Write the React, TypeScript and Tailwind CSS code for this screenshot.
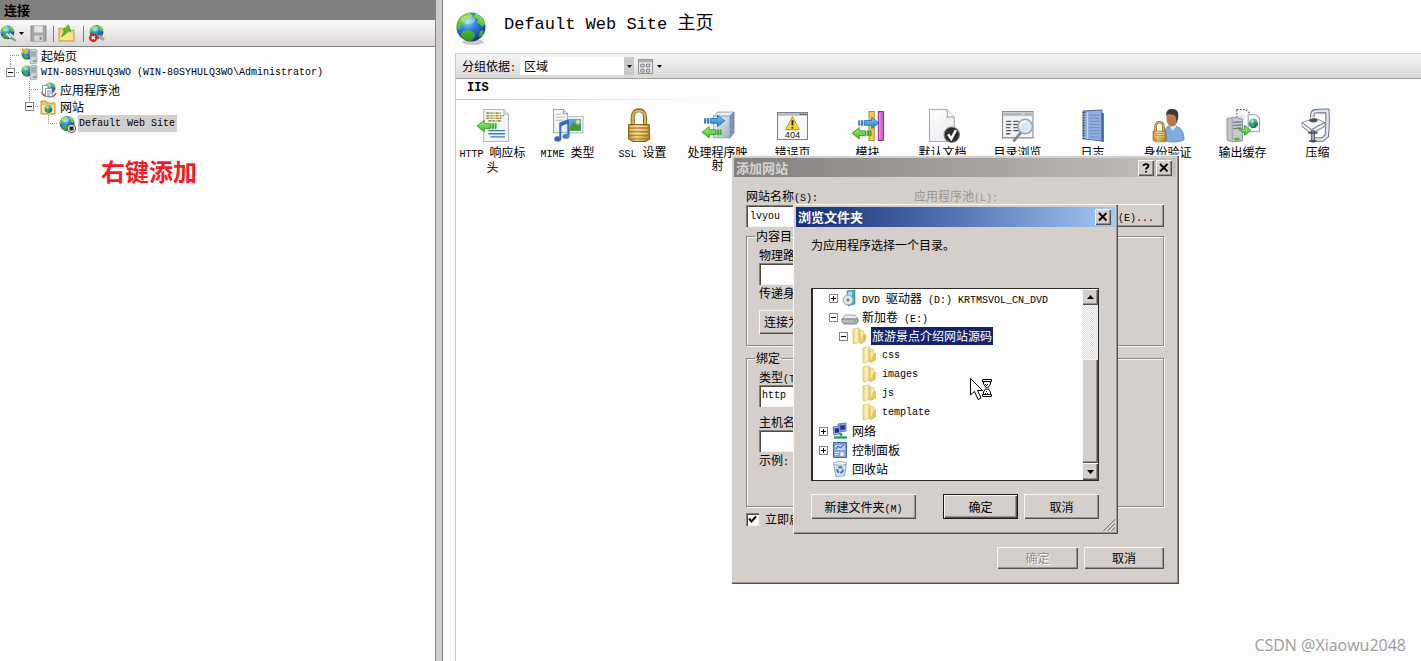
import type { ReactNode } from "react";
import { useState } from "react";

const RAISED =
  "bg-[#d5cfcb] shadow-[inset_1px_1px_0_#f8f6f4,inset_-1px_-1px_0_#55514e,inset_-2px_-2px_0_#98928e]";
const SUNKEN =
  "bg-[#fefefe] shadow-[inset_1px_1px_0_#84807c,inset_2px_2px_0_#4c4846,inset_-1px_-1px_0_#f4f2f0]";
const ETCHED = "border border-[#8c8783] shadow-[1px_1px_0_#f8f6f4,inset_1px_1px_0_#f8f6f4]";
const LATIN = "font-['Liberation_Mono',monospace] text-[10px]";

function runs(text: string) {
  return text.split(/([\x20-\x7e]+)/).map((part, i) =>
    i % 2 ? (
      <span key={i} className={`${LATIN} leading-none`}>
        {part}
      </span>
    ) : (
      part
    ),
  );
}

/* Mixed text: Latin runs are set smaller so that two of their cells fill one ideograph. */
function T({ children }: { children: string }) {
  const latinOnly = /^[\x20-\x7e]+$/.test(children);
  return <span className={`whitespace-pre ${latinOnly ? LATIN : ""}`}>{runs(children)}</span>;
}

function Gradients() {
  return (
    <svg width="0" height="0" className="absolute" aria-hidden="true">
      <defs>
        <radialGradient id="sea" cx="0.38" cy="0.3" r="0.75">
          <stop offset="0" stopColor="#8fe0fb" />
          <stop offset="0.4" stopColor="#2f86d8" />
          <stop offset="1" stopColor="#12307c" />
        </radialGradient>
        <linearGradient id="land" x1="0" y1="0" x2="0" y2="1">
          <stop offset="0" stopColor="#8be04a" />
          <stop offset="1" stopColor="#2a9a1e" />
        </linearGradient>
        <linearGradient id="gold" x1="0" y1="0" x2="1" y2="0">
          <stop offset="0" stopColor="#b98a2c" />
          <stop offset="0.4" stopColor="#f0d68a" />
          <stop offset="1" stopColor="#a87620" />
        </linearGradient>
        <linearGradient id="folder" x1="0" y1="0" x2="1" y2="0">
          <stop offset="0" stopColor="#ecd67c" />
          <stop offset="0.5" stopColor="#fcf4b8" />
          <stop offset="1" stopColor="#e4c864" />
        </linearGradient>
        <linearGradient id="steel" x1="0" y1="0" x2="1" y2="1">
          <stop offset="0" stopColor="#f8fafd" />
          <stop offset="1" stopColor="#9cabc0" />
        </linearGradient>
        <linearGradient id="paper" x1="0" y1="0" x2="1" y2="1">
          <stop offset="0" stopColor="#ffffff" />
          <stop offset="1" stopColor="#e4e8ec" />
        </linearGradient>
        <linearGradient id="bluearrow" x1="0" y1="0" x2="0" y2="1">
          <stop offset="0" stopColor="#7cc8f4" />
          <stop offset="1" stopColor="#1c84d8" />
        </linearGradient>
        <linearGradient id="greenarrow" x1="0" y1="0" x2="0" y2="1">
          <stop offset="0" stopColor="#a4f074" />
          <stop offset="1" stopColor="#3cc024" />
        </linearGradient>
      </defs>
    </svg>
  );
}

function Globe({ x = 8, y = 8, r = 7 }: { x?: number; y?: number; r?: number }) {
  return (
    <g transform={`translate(${x} ${y}) scale(${r / 10})`}>
      <circle r="10" fill="url(#sea)" />
      <path
        d="M-9-4C-8-7-5-9.500-1-9.800L1-8 -1-6 -3-5.500 -4-3 -7-1 -8 2 -9.600 1ZM3-9.300C6-8.500 9-5.500 9.700-2L8 0 6-2 4-3 5-5 2-7ZM-6 3L-2 2 2 4 3 6 0 9.800C-3 9.800-6 8-7 6ZM6 3L8.800 2 8 6 5.500 7Z"
        fill="url(#land)"
      />
      <ellipse cx="-2" cy="-5" rx="5" ry="3" fill="#fff" opacity="0.3" />
    </g>
  );
}

function Server({ x = 9, y = 1 }: { x?: number; y?: number }) {
  return (
    <g transform={`translate(${x} ${y})`}>
      <path d="M0 1L5 0 7 1V14L1 15 0 14Z" fill="#ccd3d8" stroke="#848e98" strokeWidth="0.600" />
      <path d="M1 3H6M1 5H6M1 7H6" stroke="#6c7680" strokeWidth="0.800" />
      <path d="M3 11H6V13H3Z" fill="#5fc23a" />
    </g>
  );
}

function Svg({ s = 16, v = 16, children }: { s?: number; v?: number; children: ReactNode }) {
  return (
    <svg width={s} height={s} viewBox={`0 0 ${v} ${v}`} aria-hidden="true" className="shrink-0 overflow-visible">
      {children}
    </svg>
  );
}

function Padlock({ x = 0, y = 0, k = 1 }: { x?: number; y?: number; k?: number }) {
  return (
    <g transform={`translate(${x} ${y}) scale(${k})`}>
      <path d="M5.500 17V8C5.500-1 17.500-1 17.500 8V17" fill="none" stroke="#8a661c" strokeWidth="4" />
      <path d="M5.500 17V8C5.500-.5 17.500-.5 17.500 8V17" fill="none" stroke="#dcb85c" strokeWidth="2" />
      <path d="M1.500 15L21.500 15 22 29 18 31.500H6L1.500 29Z" fill="url(#gold)" stroke="#8f6618" />
      <path d="M2 18.500H21.500M2 22H21.500M2 25.500H21.500M3 29H20" stroke="#a87a24" strokeWidth="1" />
      <path d="M3 17H20M3 20.300H20M3 24H20" stroke="#f8e4a4" strokeWidth="0.800" />
    </g>
  );
}

const GreenArrow = ({ x, y }: { x: number; y: number }) => (
  <g transform={`translate(${x} ${y})`} fill="url(#greenarrow)" stroke="#2c9418" strokeWidth="0.800">
    <path d="M0 5.500L7 0V3.200H13V7.800H7V11Z" />
    <path d="M14.500 3.200H16V7.800H14.500ZM17.500 3.200H18.500V7.800H17.500Z" />
  </g>
);
const BlueArrow = ({ x, y }: { x: number; y: number }) => (
  <g transform={`translate(${x} ${y})`} fill="url(#bluearrow)" stroke="#1c68b4" strokeWidth="0.800">
    <path d="M20 5.500L13 0V3.200H6V7.800H13V11Z" />
    <path d="M3.200 3.200H4.500V7.800H3.200ZM.5 3.200H1.500V7.800H.5Z" />
  </g>
);

const features: { label: string; icon: ReactNode }[] = [
  {
    label: "HTTP 响应标头",
    icon: (
      <>
        <path d="M7.500.5H27L31.500 5V31.500H7.500Z" fill="#f0f8f4" stroke="#a9bcc0" />
        <path d="M27 .5V5H31.500" fill="#d8e4e6" stroke="#a9bcc0" />
        <path d="M10 4H24M10 6.500H27M10 9H25M12 11.500H24" stroke="#98922c" strokeWidth="1.500" strokeDasharray="3 1 2 1 1 1" />
        <path d="M12 21H28M12 24H28M14 27H28" stroke="#3c7cb8" strokeWidth="1.300" />
        <GreenArrow x={1} y={11} />
      </>
    ),
  },
  {
    label: "MIME 类型",
    icon: (
      <>
        <path d="M2.500.5H12L16 4.500V23H2.500Z" fill="url(#paper)" stroke="#9aa2aa" />
        <path d="M12 .5V4.500H16" fill="#dfe4e8" stroke="#9aa2aa" />
        <path d="M4.500 5H10M4.500 8H13M4.500 11H12" stroke="#b4bcc4" />
        <path d="M16 7.500H31V23H16Z" fill="#fff" stroke="#a4b0c0" />
        <path d="M18 9.500H29V21H18Z" fill="#58a4e4" />
        <path d="M18 21V18L22 12 26 17 29 14V21Z" fill="#48962c" />
        <circle cx="26" cy="12.500" r="2" fill="#f7dd50" />
        <path d="M9 29V14L17 11V26" fill="none" stroke="#3c6cbc" strokeWidth="2" />
        <path d="M9 15L17 12" stroke="#3c6cbc" strokeWidth="3.500" />
        <ellipse cx="6.500" cy="29" rx="3.300" ry="2.600" fill="#3868b8" />
        <ellipse cx="14.500" cy="26.500" rx="3.300" ry="2.600" fill="#4c80d0" />
      </>
    ),
  },
  { label: "SSL 设置", icon: <Padlock x={1} /> },
  {
    label: "处理程序映射",
    icon: (
      <>
        <path d="M12 7L16 3H32L28 7Z" fill="#e4edf6" stroke="#8fa0b6" strokeWidth="0.800" />
        <path d="M28 7L32 3V23L28 28Z" fill="#7c94b6" stroke="#6c80a2" strokeWidth="0.800" />
        <path d="M12 7H28V28H12Z" fill="url(#steel)" stroke="#8fa0b6" strokeWidth="0.800" />
        <BlueArrow x={3} y={6} />
        <GreenArrow x={1} y={17} />
      </>
    ),
  },
  {
    label: "错误页",
    icon: (
      <>
        <path d="M1.500 3.500H30.500V29.500H1.500Z" fill="#f8f8f8" stroke="#7c8288" />
        <path d="M2 4H30V6.500H2Z" fill="#b4bac4" />
        <path d="M23 5.200H24.500M25.500 5.200H27M28 5.200H29.500" stroke="#3c444c" />
        <path d="M16 7.500L22.500 20H9.500Z" fill="#f9dc2c" stroke="#c89c10" strokeLinejoin="round" />
        <path d="M16 11V16M16 17.500V19" stroke="#222" strokeWidth="1.800" />
        <text x="16" y="28" textAnchor="middle" fontSize="9" fontFamily="Liberation Sans, sans-serif" fill="#222">
          404
        </text>
      </>
    ),
  },
  {
    label: "模块",
    icon: (
      <>
        <path d="M17.500 2.500H22.500V30.500H17.500Z" fill="#f8cc50" stroke="#b88c20" />
        <path d="M26.500 2.500H31.500V30.500H26.500Z" fill="#d460cc" stroke="#9a3494" />
        <path d="M28 4V29" stroke="#f0a0e8" />
        <BlueArrow x={7} y={8} />
        <GreenArrow x={1} y={18} />
      </>
    ),
  },
  {
    label: "默认文档",
    icon: (
      <>
        <path d="M3.500.5H20L27.500 8V31.500H3.500Z" fill="url(#paper)" stroke="#a8acb0" />
        <path d="M20 .5C21.500 4 21 7 20.500 8 24 7 26 7.500 27.500 8" fill="#fff" stroke="#a0a4a8" />
        <circle cx="25" cy="25" r="7.500" fill="#2c2c2c" stroke="#8a8a8a" />
        <path d="M21.500 24.500L24.500 29 29 20.500" fill="none" stroke="#fff" strokeWidth="2.400" />
      </>
    ),
  },
  {
    label: "目录浏览",
    icon: (
      <>
        <path d="M1.500 2.500H31V28H1.500Z" fill="#f3f4f5" stroke="#84898e" />
        <path d="M2 3H30.500V7H2Z" fill="#c6cad0" />
        <path d="M4 5H20M24 5H29" stroke="#7c828a" strokeDasharray="1 1" />
        <path d="M5 12H10M12 12H17M5 15H10M12 15H17M5 18H9M12 18H16M5 21H10M12 21H17M5 24H9" stroke="#555b62" strokeWidth="1.300" />
        <path d="M20 22L12 31.500" stroke="#7c8690" strokeWidth="2.600" />
        <circle cx="23.500" cy="17" r="7" fill="#d2e8fa" stroke="#9ca8b4" strokeWidth="1.500" />
        <path d="M19 17C19 14 21 12 24 12" fill="none" stroke="#fff" strokeWidth="1.500" />
      </>
    ),
  },
  {
    label: "日志",
    icon: (
      <>
        <path d="M24 3L27 4V32L23 31Z" fill="#4c679c" />
        <path d="M7 2L25 1V31L7 29Z" fill="#8fb0e0" stroke="#4a6aa4" />
        <path d="M11 3V29" stroke="#c8daf4" />
        <path d="M13 6H23M13 9H23M13 12H23M13 15H23M13 18H23M13 21H23M13 24H23M13 27H23" stroke="#6a8cc4" strokeWidth="0.900" />
        <path d="M7.500 3V29" stroke="#56606c" strokeWidth="3" strokeDasharray="1 1.500" />
      </>
    ),
  },
  {
    label: "身份验证",
    icon: (
      <>
        <path d="M12 31C10 20 15 16 21 16 29 17 32 22 32 30 25 33 18 32 12 31Z" fill="#7eaedd" stroke="#5688bc" strokeWidth="0.800" />
        <path d="M18 16L21 21 25 16Z" fill="#e8f0f8" />
        <ellipse cx="20.500" cy="9.500" rx="5.500" ry="7.500" fill="#b97a4c" />
        <path d="M14.500 7C14.500 1 18-.5 21 0 26 0 27.500 4 26 10L24.500 13C25 8 23 5 20 5.500 17 4 16 5 14.500 7Z" fill="#3e3a3c" />
        <Padlock x={1} y={12} k={0.63} />
      </>
    ),
  },
  {
    label: "输出缓存",
    icon: (
      <>
        <path d="M10.500.5H19L23 4V17H10.500Z" fill="#f8fafa" stroke="#444" strokeDasharray="1.500 1.500" />
        <path d="M21.500 5.500H29L32.500 9V22H21.500Z" fill="#fff" stroke="#9aa4ae" />
        <circle cx="15" cy="9" r="3.500" fill="#d8eaf0" />
        <Globe x={26.500} y={14} r={4.500} />
        <path d="M1 9L10 8 16 10V31L6 32 1 30Z" fill="#c4c8cb" stroke="#7f858a" strokeWidth="0.800" />
        <path d="M6 10V31.500" stroke="#989fa4" />
        <path d="M7 13L15 12.500M7 16L15 15.500M7 19L15 18.500" stroke="#6f767c" strokeWidth="1.200" />
        <path d="M8 28H13V30.500H8Z" fill="#54b830" />
        <path d="M12 18C14 20 16 20 18 19.500V16L24 21 18 25.500V22.500C15 23 13 21 12 18Z" fill="url(#greenarrow)" stroke="#2c8c1c" strokeWidth="0.800" />
      </>
    ),
  },
  {
    label: "压缩",
    icon: (
      <>
        <path d="M1 13L14 9 23 13 10 20Z" fill="#f6f7f8" stroke="#8a9096" strokeWidth="0.900" />
        <path d="M1 13V17L10 24 23 17V13L10 20Z" fill="#d4d7dc" stroke="#777d84" strokeWidth="0.900" />
        <path d="M1 15L10 22 23 15" fill="none" stroke="#fff" />
        <path d="M11 8V5C11.500 2 14 1.800 25.500 1.800 26.500 12 25.500 18 25 26L21 29.500H13" fill="none" stroke="#69788f" strokeWidth="4.400" />
        <path d="M11 8V5C11.500 2 14 1.800 25.500 1.800 26.500 12 25.500 18 25 26L21 29.500H13" fill="none" stroke="#dfe5ee" strokeWidth="2.400" />
        <ellipse cx="12" cy="11" rx="4" ry="2" fill="#4c545e" />
        <path d="M10 21H13V32H10Z" fill="#a8b0bc" stroke="#4d5663" strokeWidth="0.900" />
        <path d="M7 23H16M8 31H15" stroke="#4d5663" strokeWidth="2" />
      </>
    ),
  },
];

type CellKind = "start" | "tee" | "last" | "box" | "none";

function Cell({ kind }: { kind: CellKind }) {
  return (
    <svg width="19" height="17" viewBox="0 0 19 17" aria-hidden="true" className="shrink-0" shapeRendering="crispEdges">
      <g stroke="#8c8c8c" strokeDasharray="1 1">
        {kind === "start" && <path d="M9.500 8V17" />}
        {kind === "tee" && <path d="M9.500 0V17" />}
        {(kind === "last" || kind === "box") && <path d="M9.500 0V9" />}
        {kind !== "none" && <path d="M9 8.500H19" />}
      </g>
      {kind === "box" && (
        <>
          <path d="M5.500 4.500H13.500V12.500H5.500Z" fill="#fff" stroke="#848484" />
          <path d="M7 8.500H12" stroke="#000" />
        </>
      )}
    </svg>
  );
}

const connections: { cells: CellKind[]; label: string; icon: ReactNode; selected?: boolean }[] = [
  {
    cells: ["start"],
    label: "起始页",
    icon: (
      <>
        <Globe x={6} y={6} r={5.500} />
        <path d="M1 0L4 2 7 0 7 4 4 5 1 4Z" fill="#f3a92c" />
        <Server />
      </>
    ),
  },
  {
    cells: ["box"],
    label: "WIN-80SYHULQ3WO (WIN-80SYHULQ3WO\\Administrator)",
    icon: (
      <>
        <Globe x={6} y={6} r={5.500} />
        <Server y={0} />
      </>
    ),
  },
  {
    cells: ["none", "tee"],
    label: "应用程序池",
    icon: (
      <>
        <Globe x={10} y={6} r={5.500} />
        <path d="M2 10C1 15 14 17 16 11" fill="none" stroke="#c83c34" strokeWidth="1.500" />
        <path d="M2.500 3.500H8V12H2.500Z" fill="#fff" stroke="#8894a4" />
        <path d="M5.500 6.500H12V14.500H5.500Z" fill="#fff" stroke="#8894a4" />
        <path d="M7 9H11M7 11H11M7 13H10" stroke="#6c8cbc" />
      </>
    ),
  },
  {
    cells: ["none", "box"],
    label: "网站",
    icon: (
      <>
        <path d="M1 2H6L8 4H15V15H1Z" fill="#ecc65c" stroke="#c49a34" />
        <path d="M2 6H14V14H2Z" fill="#f9e6a0" />
        <Globe x={8.500} y={10} r={3.800} />
      </>
    ),
  },
  {
    cells: ["none", "none", "last"],
    label: "Default Web Site",
    selected: true,
    icon: (
      <>
        <Globe x={8} y={7.500} r={7.500} />
        <rect x="8.500" y="8.500" width="8" height="8" rx="3.500" fill="#f4f4f4" stroke="#555" />
        <path d="M10.500 10.500H14.500V14.500H10.500Z" fill="#222" />
      </>
    ),
  },
];

const FolderArt = (
  <>
    <path d="M1 1L7 0 8 2V14L2 16 1 15Z" fill="url(#folder)" stroke="#d4b858" strokeWidth="0.600" />
    <path d="M8 2L12 3V14L8 15.500Z" fill="#f6e89c" stroke="#d4b858" strokeWidth="0.600" />
    <path d="M12 6L14 6V13L9 16 8 15Z" fill="#e2c65c" />
  </>
);

const folders: { level: number; label: string; box?: "+" | "-"; icon: ReactNode; selected?: boolean }[] = [
  {
    level: 1,
    label: "DVD 驱动器 (D:) KRTMSVOL_CN_DVD",
    box: "+",
    icon: (
      <>
        <path d="M5 1L13 0V14L6 16Z" fill="#48a8c4" stroke="#2c86a0" strokeWidth="0.600" />
        <path d="M6 2L10 1.500V8H6Z" fill="#a8e0ee" />
        <circle cx="6" cy="10" r="5" fill="#dfe6ea" stroke="#8c969c" strokeWidth="0.800" />
        <circle cx="6" cy="10" r="1.500" fill="#66808c" />
      </>
    ),
  },
  {
    level: 1,
    label: "新加卷 (E:)",
    box: "-",
    icon: (
      <>
        <path d="M3 6H13L16 10H0Z" fill="#ececee" stroke="#95999e" strokeWidth="0.800" />
        <path d="M0 10H16V13L14 15H2L0 13Z" fill="#b4b9be" stroke="#6c7176" strokeWidth="0.800" />
        <path d="M12 11.500H14.500V13H12Z" fill="#48c83c" />
      </>
    ),
  },
  { level: 2, label: "旅游景点介绍网站源码", box: "-", icon: FolderArt, selected: true },
  { level: 3, label: "css", icon: FolderArt },
  { level: 3, label: "images", icon: FolderArt },
  { level: 3, label: "js", icon: FolderArt },
  { level: 3, label: "template", icon: FolderArt },
  {
    level: 0,
    label: "网络",
    box: "+",
    icon: (
      <>
        <path d="M6 1L14 0V8L7 9Z" fill="#8fa4d8" stroke="#566a9c" strokeWidth="0.800" />
        <path d="M8 2.500L13 2V6.500L8 7Z" fill="#2434b0" />
        <path d="M1 4L8 3V11L2 12Z" fill="#a9b8e0" stroke="#566a9c" strokeWidth="0.800" />
        <path d="M2.500 5.500L7 5V9.500L3 10Z" fill="#1c2ca4" />
        <path d="M9 10V13M2 14.500H15" stroke="#30a45c" strokeWidth="2.500" />
      </>
    ),
  },
  {
    level: 0,
    label: "控制面板",
    box: "+",
    icon: (
      <>
        <path d="M1.500.5H14.500V15.500H1.500Z" fill="#7ca2e0" stroke="#4468a8" />
        <path d="M3 3H13V8H3Z" fill="#bcd2f6" />
        <path d="M4 7L6 4 8 6 12 3" fill="none" stroke="#2850a8" />
        <path d="M3 10.500H7M3 12.500H6" stroke="#e0ecfc" />
        <circle cx="10" cy="12" r="2.200" fill="#f0e8c0" />
      </>
    ),
  },
  {
    level: 0,
    label: "回收站",
    icon: (
      <>
        <path d="M1.500 2.500L14.500 2 12.500 15 4 15.500Z" fill="#cfe2ee" stroke="#8fa8b8" />
        <ellipse cx="8" cy="2.500" rx="6.500" ry="1.800" fill="#eff6fa" stroke="#8fa8b8" />
        <circle cx="8" cy="9" r="2.800" fill="none" stroke="#2f74c8" strokeWidth="1.800" strokeDasharray="4 1.500" />
      </>
    ),
  },
];

function PushButton({
  children,
  className,
  disabled,
}: {
  children: string;
  className: string;
  disabled?: boolean;
}) {
  return (
    <button
      type="button"
      disabled={disabled}
      className={`flex items-center justify-center ${RAISED} disabled:text-[#96918d] disabled:[text-shadow:1px_1px_0_#fff] ${className}`}
    >
      <T>{children}</T>
    </button>
  );
}

function CaptionButton({ label, children }: { label: string; children: ReactNode }) {
  return (
    <button type="button" aria-label={label} className={`flex h-4 w-4 items-center justify-center text-black ${RAISED}`}>
      <svg width="10" height="10" viewBox="0 0 10 10" fill="none" stroke="#000" strokeWidth="1.800" aria-hidden="true">
        {children}
      </svg>
    </button>
  );
}

const Cross = <path d="M1 1L8.500 8.500M8.500 1L1 8.500" />;
const Caret = () => (
  <svg width="5" height="3" viewBox="0 0 5 3" aria-hidden="true">
    <path d="M0 0H5L2.500 3Z" />
  </svg>
);

function ConnectionsPane() {
  return (
    <aside className="w-[435px] shrink-0 bg-[#fefdfd]">
      <h2 className="h-5 bg-[#80807e] pl-1 text-[13px] leading-5 font-bold">连接</h2>
      <div className="flex h-[27px] items-center border-t border-b border-t-[#f4f4f4] border-b-[#858381] bg-linear-to-b from-[#fbfafa] to-[#dad7d6]">
        <button type="button" aria-label="连接到" className="flex items-center gap-0.5">
          <Svg s={17}>
            <Globe x={7} y={7} r={6.500} />
            <path d="M6 8L10 12M9 8L14 13" stroke="#d8dcdc" strokeWidth="2" />
            <path d="M10 12L15 15" stroke="#8c9498" strokeWidth="2" />
          </Svg>
          <Caret />
        </button>
        <button type="button" aria-label="保存" className="ml-1.5" disabled>
          <Svg s={17}>
            <path d="M1 1H15V15H1Z" fill="#a9a8a7" stroke="#8b8a89" />
            <path d="M4 1H12V7H4Z" fill="#e4e4e3" />
            <path d="M4 10H12V15H4Z" fill="#d8d7d6" />
            <path d="M9 11H11V14H9Z" fill="#8b8a89" />
          </Svg>
        </button>
        <span className="ml-1.5 h-4 w-px bg-[#807e7c]" />
        <button type="button" aria-label="向上" className="ml-1">
          <Svg s={17}>
            <path d="M1 3H6L8 5H15V15H1Z" fill="#eecf6c" stroke="#c8a23c" />
            <path d="M2 8H14V14H2Z" fill="#f8e49c" />
            <path d="M3 11L6 6 4.500 5 10 0 12 6 9.500 5.500C8 8 6 10 3 11Z" fill="#58bc28" stroke="#388c18" strokeWidth="0.600" />
          </Svg>
        </button>
        <span className="ml-2 h-4 w-px bg-[#807e7c]" />
        <button type="button" aria-label="删除连接" className="ml-1">
          <Svg s={17}>
            <Globe x={8} y={6.500} r={6.500} />
            <path d="M10 10L15 14" stroke="#9ca4a8" strokeWidth="2.500" />
            <circle cx="5" cy="12" r="4" fill="#d42020" />
            <path d="M3.500 10.500L6.500 13.500M6.500 10.500L3.500 13.500" stroke="#fff" strokeWidth="1.300" />
          </Svg>
        </button>
      </div>
      <ul className="pl-px">
        {connections.map((c) => (
          <li key={c.label} className="flex h-[17px] items-center">
            {c.cells.map((kind, i) => (
              <Cell key={i} kind={kind} />
            ))}
            <span className="flex w-[18px] justify-center">
              <Svg>{c.icon}</Svg>
            </span>
            <span className={`ml-0.5 flex h-[17px] items-center px-px ${c.selected ? "bg-[#d2cfcd] pr-0.5" : ""}`}>
              <T>{c.label}</T>
            </span>
          </li>
        ))}
      </ul>
      <p className="mt-[22px] ml-[101px] text-[24px] leading-[34px] font-bold text-[#f41c24]">右键添加</p>
    </aside>
  );
}

function HomePane() {
  return (
    <main className="min-w-0 flex-1 bg-[#fefdfd] pl-3">
      <header className="flex h-[53px] pl-px">
        <span className="mt-2.5">
          <svg width="32" height="36" viewBox="0 0 32 36" aria-hidden="true">
            <ellipse cx="17" cy="32" rx="11" ry="3" fill="#777" opacity="0.4" />
            <Globe x={15} y={17} r={14.500} />
          </svg>
        </span>
        <h1 className="ml-4 pt-2 text-[18px] leading-[26px] whitespace-pre">
          <span className="font-['Liberation_Mono',monospace] text-[17px]">Default Web Site </span>主页
        </h1>
      </header>
      <div className="border-l border-[#c9c7c6]">
        <div className="flex h-[26px] items-center border-t border-b border-t-[#d8d6d5] border-b-[#a19f9e] bg-linear-to-b from-[#f6f5f5] to-[#dbd9d8] pl-1.5">
          <label htmlFor="group">
            <T>分组依据:</T>
          </label>
          <div className="ml-1 flex h-[18px] w-[114px] items-center bg-white">
            <select id="group" className="h-full min-w-0 flex-1 appearance-none bg-transparent pl-1 outline-none">
              <option>区域</option>
            </select>
            <span className="flex h-full w-2.5 items-center justify-center bg-[#cbc9c7]">
              <Caret />
            </span>
          </div>
          <button type="button" aria-label="视图" className="ml-1 flex items-center gap-1">
            <Svg s={15}>
              <path d="M.5.5H15.500V15.500H.5Z" fill="#e8e8e8" stroke="#8c8c90" />
              <path d="M1 1H15V3.500H1Z" fill="#aab0b8" />
              <path d="M3 5.500H6.500V8.500H3ZM9 5.500H12.500V8.500H9ZM3 11H6.500V14H3ZM9 11H12.500V14H9Z" fill="#d4d8e4" stroke="#646870" strokeWidth="0.800" />
            </Svg>
            <Caret />
          </button>
        </div>
        <h2 className="h-5 pl-[11px] font-['Liberation_Mono',monospace] text-[12px] leading-[18px] font-bold">IIS</h2>
        <div className="h-px w-[260px] bg-linear-to-r from-[#b4c6e4] to-transparent" />
        <ul className="-ml-px flex min-h-[561px] flex-wrap content-start pt-[9px]">
          {features.map((f) => (
            <li key={f.label} className="flex w-[75px] flex-col items-center">
              <Svg s={33} v={32}>
                {f.icon}
              </Svg>
              <a href="#feature" className="mt-[3px] max-w-[68px] text-center leading-[13px] break-all">
                {runs(f.label)}
              </a>
            </li>
          ))}
        </ul>
      </div>
    </main>
  );
}

function AddSiteDialog() {
  const [start, setStart] = useState(true);
  return (
    <section aria-label="添加网站" className={`absolute top-[155px] left-[731px] w-[448px] p-[3px] ${RAISED}`}>
      <div className="flex h-[19px] items-center justify-between bg-linear-to-r from-[#83817f] to-[#c2bfbd] pr-1 pl-0.5 text-[13px] font-bold text-[#d8d4d1]">
        添加网站
        <span className="flex gap-0.5">
          <CaptionButton label="帮助">
            <path d="M2.500 3C2.500 .5 7.500 .5 7.500 3 7.500 4.500 5 4.500 5 6.500M5 8V9.500" />
          </CaptionButton>
          <CaptionButton label="关闭">{Cross}</CaptionButton>
        </span>
      </div>
      <div className="px-3 pt-[11px] pb-3">
        <div className="grid grid-cols-[168px_1fr_80px]">
          <div className="flex flex-col">
            <label htmlFor="site" className="h-4"><T>网站名称(S):</T></label>
            <input id="site" defaultValue="lvyou" className={`mt-px h-[22px] w-[150px] px-1 ${LATIN} ${SUNKEN}`} />
          </div>
          <div className="flex flex-col">
            <label htmlFor="pool" className="h-4 text-[#989390]"><T>应用程序池(L):</T></label>
            <input id="pool" disabled className={`mt-px h-[22px] w-[150px] px-1 ${LATIN} ${SUNKEN}`} />
          </div>
          <PushButton className="mt-4 h-[23px]">选择(E)...</PushButton>
        </div>
        <fieldset className={`mt-px h-[118px] px-3 ${ETCHED}`}>
          <legend className="-ml-1 h-4 px-px">内容目录</legend>
          <div className="flex flex-col items-start pt-[3px]">
            <label htmlFor="path" className="h-4"><T>物理路径(P):</T></label>
            <input id="path" className={`h-[22px] w-[300px] px-1 ${LATIN} ${SUNKEN}`} />
            <p className="h-4">传递身份验证</p>
            <PushButton className="mt-[9px] h-6 w-[82px]">连接为(C)...</PushButton>
          </div>
        </fieldset>
        <fieldset className={`mt-1 h-[157px] px-3 ${ETCHED}`}>
          <legend className="-ml-1 h-4 px-px">绑定</legend>
          <div className="flex flex-col items-start pt-[3px]">
            <label htmlFor="type" className="h-4"><T>类型(T):</T></label>
            <select id="type" className={`h-[22px] w-[100px] appearance-none px-[3px] ${LATIN} ${SUNKEN}`}>
              <option>http</option>
            </select>
            <label htmlFor="host" className="mt-[7px] h-4"><T>主机名(H):</T></label>
            <input id="host" className={`h-[22px] w-[200px] px-1 ${LATIN} ${SUNKEN}`} />
            <p className="h-4"><T>示例:</T></p>
          </div>
        </fieldset>
        <label className="mt-1 flex h-4 items-center gap-1.5">
          <span className="relative flex h-[13px] w-[13px]">
            <input
              type="checkbox"
              checked={start}
              onChange={(e) => setStart(e.target.checked)}
              className={`peer h-[13px] w-[13px] appearance-none ${SUNKEN}`}
            />
            <svg viewBox="0 0 13 13" aria-hidden="true" className="pointer-events-none absolute inset-0 hidden peer-checked:block">
              <path d="M3 5.500L5.500 8.500 10 3.500" fill="none" stroke="#000" strokeWidth="2" />
            </svg>
          </span>
          立即启动网站
        </label>
        <div className="mt-5 flex justify-end gap-1.5">
          <PushButton disabled className="h-[22px] w-[81px]">确定</PushButton>
          <PushButton className="h-[22px] w-20">取消</PushButton>
        </div>
      </div>
    </section>
  );
}

function BrowseDialog() {
  return (
    <section aria-label="浏览文件夹" className={`absolute top-[204px] left-[793px] w-[325px] p-[3px] ${RAISED}`}>
      <div className="flex h-5 items-center justify-between bg-linear-to-r from-[#152d74] via-[#5474b4] to-[#a4c8f2] pr-1 pl-0.5 text-[13px] font-bold text-white">
        浏览文件夹
        <CaptionButton label="关闭">{Cross}</CaptionButton>
      </div>
      <div className="pt-2.5 pr-4 pb-3 pl-[15px]">
        <p className="h-4">为应用程序选择一个目录。</p>
        <div className="mt-[35px] flex h-[193px] border border-l-2 border-[#2c2a29] bg-[#fefefe]">
          <ul className="-mt-px min-w-0 flex-1 pl-1.5">
            {folders.map((f) => (
              <li key={f.label} className="flex h-[19px] items-center">
                <span
                  className={
                    f.level === 3 ? "w-[30px]" : f.level === 2 ? "w-5" : f.level === 1 ? "w-2.5" : "w-0"
                  }
                />
                <svg width="10" height="12" viewBox="0 0 10 12" aria-hidden="true" shapeRendering="crispEdges">
                  {f.box && <path d="M.5 2.500H8.500V10.500H.5Z" fill="#fff" stroke="#848484" />}
                  {f.box && <path d={f.box === "+" ? "M2 6.500H7M4.500 4V9" : "M2 6.500H7"} stroke="#000" />}
                </svg>
                <span className="ml-0.5 flex w-[18px] justify-center">
                  <Svg>{f.icon}</Svg>
                </span>
                <span className={`ml-0.5 px-px leading-[18px] ${f.selected ? "bg-[#14246c] text-white" : ""}`}>
                  <T>{f.label}</T>
                </span>
              </li>
            ))}
          </ul>
          <div className="flex w-4 flex-col bg-[repeating-conic-gradient(#fff_0_25%,#d9d6d3_0_50%)] bg-[length:2px_2px]">
            <button type="button" aria-label="向上滚动" className={`flex h-4 items-center justify-center ${RAISED}`}>
              <svg width="7" height="4" viewBox="0 0 7 4" aria-hidden="true"><path d="M0 4H7L3.500 0Z" /></svg>
            </button>
            <div className="flex-1" />
            <div className={`h-[104px] ${RAISED}`} />
            <button type="button" aria-label="向下滚动" className={`flex h-[17px] items-center justify-center ${RAISED}`}>
              <svg width="7" height="4" viewBox="0 0 7 4" aria-hidden="true"><path d="M0 0H7L3.500 4Z" /></svg>
            </button>
          </div>
        </div>
        <div className="mt-[13px] flex items-center gap-1.5">
          <PushButton className="mr-auto h-[25px] w-[105px]">新建文件夹(M)</PushButton>
          <PushButton className="h-[25px] w-[75px] border border-[#1c1a1a]">确定</PushButton>
          <PushButton className="h-[25px] w-[75px]">取消</PushButton>
        </div>
      </div>
      <svg width="13" height="13" viewBox="0 0 13 13" aria-hidden="true" className="absolute right-[3px] bottom-[3px]">
        <path d="M1 13L13 1M5 13L13 5M9 13L13 9" stroke="#87827e" strokeWidth="1.500" />
        <path d="M0 13L13 0M4 13L13 4M8 13L13 8" stroke="#fff" strokeWidth="0.700" />
      </svg>
      <svg width="24" height="24" viewBox="0 0 24 24" aria-hidden="true" className="absolute top-[174px] left-[177px]">
        <path d="M.5.5V17L4.500 13.500 8 21.500 11 20 7.500 12.500H12.500Z" fill="#fff" stroke="#000" />
        <path d="M13.500 3V6L16 9.500V10.500L13.500 14V17H20.500V14L18 10.500V9.500L20.500 6V3Z" fill="#fff" stroke="#000" />
        <path d="M12.500 1.500H21.500V3.500H12.500ZM12.500 16.500H21.500V18.500H12.500Z" fill="#fff" stroke="#000" />
        <path d="M15 6.500H19M16 7.500H18M17 9V12M16 13.500H18M15 15.500H19" stroke="#000" strokeDasharray="1 1" />
      </svg>
    </section>
  );
}

export default function App() {
  return (
    <div className="relative flex min-h-screen overflow-hidden bg-[#fefdfd] font-['Noto_Sans_CJK_SC',sans-serif] text-[12px] leading-4 text-black">
      <Gradients />
      <ConnectionsPane />
      <div className="w-2 shrink-0 border-r border-l border-[#858381] bg-[#cfcccb]" />
      <HomePane />
      <AddSiteDialog />
      <BrowseDialog />
      <p className="absolute right-[15px] bottom-1 font-['Open_Sans',sans-serif] text-[16px] leading-6 text-[#9c9c9c]">
        CSDN @Xiaowu2048
      </p>
    </div>
  );
}
